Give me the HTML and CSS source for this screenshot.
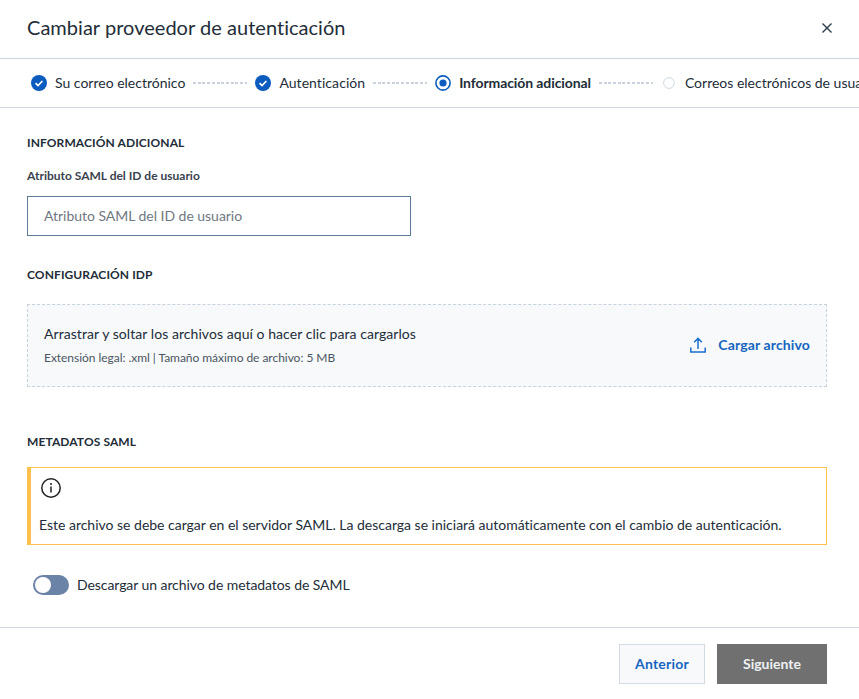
FILE: index.html
```html
<!DOCTYPE html>
<html lang="es">
<head>
<meta charset="utf-8">
<title>Cambiar proveedor de autenticación</title>
<link rel="stylesheet" href="styles.css">
</head>
<body>
<div class="modal">
  <header class="head">
    <h1 class="title">Cambiar proveedor de autenticación</h1>
    <button class="close" aria-label="Cerrar">
      <svg width="10" height="10" viewBox="0 0 10 10"><path d="M.5.5l9 9M9.5.5l-9 9" fill="none" stroke="#2b3a4a" stroke-width="1.4"/></svg>
    </button>
  </header>
  <nav class="stepper">
    <div class="step">
      <svg class="ico" width="16" height="16" viewBox="0 0 16 16"><circle cx="8" cy="8" r="8" fill="#0b5cbe"/><path d="M4.6 8.2l2.4 2.4 4.4-4.6" fill="none" stroke="#fff" stroke-width="1.7"/></svg>
      <span>Su correo electrónico</span>
    </div>
    <i class="dash"></i>
    <div class="step wide">
      <svg class="ico" width="16" height="16" viewBox="0 0 16 16"><circle cx="8" cy="8" r="8" fill="#0b5cbe"/><path d="M4.6 8.2l2.4 2.4 4.4-4.6" fill="none" stroke="#fff" stroke-width="1.7"/></svg>
      <span>Autenticación</span>
    </div>
    <i class="dash"></i>
    <div class="step current">
      <svg class="ico" width="16" height="16" viewBox="0 0 16 16"><circle cx="8" cy="8" r="7.1" fill="none" stroke="#0b5cbe" stroke-width="1.6"/><circle cx="8" cy="8" r="3.6" fill="#0b5cbe"/></svg>
      <span>Información adicional</span>
    </div>
    <i class="dash"></i>
    <div class="step last">
      <svg class="ico small" width="12" height="12" viewBox="0 0 12 12"><circle cx="6" cy="6" r="5.4" fill="none" stroke="#cfd8e3" stroke-width="1"/></svg>
      <span>Correos electrónicos de usuario</span>
    </div>
  </nav>
  <main class="content">
    <h2 class="section first">INFORMACIÓN ADICIONAL</h2>
    <label class="label" for="attr">Atributo SAML del ID de usuario</label>
    <input class="input" id="attr" placeholder="Atributo SAML del ID de usuario">
    <h2 class="section idp">CONFIGURACIÓN IDP</h2>
    <div class="drop">
      <div class="drop-text">
        <div class="drop-main">Arrastrar y soltar los archivos aquí o hacer clic para cargarlos</div>
        <div class="drop-sub">Extensión legal: .xml | Tamaño máximo de archivo: 5 MB</div>
      </div>
      <a class="upload">
        <svg width="16" height="16" viewBox="0 0 16 16" fill="none" stroke="#1a6fd0" stroke-width="1.5"><path d="M.8 10.5v4.4h14.4v-4.4M8 12V1.6M4.2 5.2L8 1.4l3.8 3.8"/></svg>
        <span>Cargar archivo</span>
      </a>
    </div>
    <h2 class="section meta">METADATOS SAML</h2>
    <div class="alert">
      <svg class="alert-ico" width="20" height="20" viewBox="0 0 20 20"><circle cx="10" cy="10" r="9.2" fill="none" stroke="#222" stroke-width="1.5"/><path d="M10 8.6v6" stroke="#222" stroke-width="1.5"/><circle cx="10" cy="5.9" r="1" fill="#222"/></svg>
      <p class="alert-text">Este archivo se debe cargar en el servidor SAML. La descarga se iniciará automáticamente con el cambio de autenticación.</p>
    </div>
    <div class="toggle-row">
      <span class="toggle"><span class="knob"></span></span>
      <span class="toggle-text">Descargar un archivo de metadatos de SAML</span>
    </div>
  </main>
  <footer class="foot">
    <button class="btn prev">Anterior</button>
    <button class="btn next">Siguiente</button>
  </footer>
</div>
</body>
</html>
```
FILE: styles.css
```css
* { box-sizing: border-box; }
html, body { margin: 0; height: 100%; background: #fff; overflow: hidden; }
body { font-family: Lato, "Liberation Sans", sans-serif; color: #222d38; font-size: 14px; font-variant-ligatures: none; }
.modal { width: 859px; height: 699px; display: flex; flex-direction: column; }
.head { height: 59px; padding: 0 25px 0 27px; border-bottom: 1px solid #cbd5e1; display: flex; align-items: center; justify-content: space-between; flex: none; }
.title { margin: 0 0 4px; font-size: 20px; font-weight: 400; color: #222d38; line-height: 24px; letter-spacing: 0.03px; }
.close { border: 0; background: none; padding: 0; margin-bottom: 3px; width: 14px; height: 14px; display: flex; align-items: center; justify-content: center; }
.stepper { height: 49px; flex: none; padding: 0 0 1px 31px; border-bottom: 1px solid #cfd6de; display: flex; align-items: center; gap: 8px; overflow: hidden; white-space: nowrap; }
.step { display: flex; align-items: center; gap: 8px; flex: none; }
.step.wide { letter-spacing: 0.06px; }
.step.current { font-weight: 700; gap: 8px; letter-spacing: -0.1px; }
.step.last { gap: 10px; }
.ico { flex: none; }
.ico.small { margin-left: 2px; }
.dash { width: 54px; height: 2px; flex: none; background: repeating-linear-gradient(90deg, #c9d3de 0 3px, transparent 3px 4.7px); }
.content { flex: 1; padding: 0 32px 0 27px; }
.section { margin: 0; font-size: 12px; font-weight: 700; line-height: 15px; color: #222d38; letter-spacing: 0.1px; }
.section.first { padding-top: 27px; }
.label { display: block; margin-top: 18px; font-size: 12px; font-weight: 700; line-height: 15px; color: #39434e; }
.input { display: block; width: 384px; height: 40px; margin-top: 13px; padding: 0 16px 2px; border: 1px solid #5f7a9b; border-radius: 0; font: 14px Lato, sans-serif; letter-spacing: -0.03px; outline: none; }
.input::placeholder { color: #6f7780; opacity: 1; }
.section.idp { margin-top: 31px; }
.drop { margin-top: 22px; height: 83px; padding: 0 16px 2px; background: #f7f9fb; border: 1px dashed #c9d3de; display: flex; align-items: center; justify-content: space-between; }
.drop-main { font-size: 14px; line-height: 18px; letter-spacing: 0.06px; }
.drop-sub { margin-top: 7px; font-size: 12px; line-height: 15px; color: #4b5560; letter-spacing: -0.04px; }
.upload { display: flex; align-items: center; gap: 12px; color: #1565c0; font-weight: 700; font-size: 14px; letter-spacing: 0.13px; }
.section.meta { margin-top: 47px; }
.alert { margin-top: 18px; height: 78px; padding: 10px 8px; border: 1px solid #ffc04d; border-left-width: 4px; }
.alert-ico { display: block; margin-left: 2px; }
.alert-text { margin: 18px 0 0; font-size: 14px; line-height: 18px; letter-spacing: -0.01px; }
.toggle-row { margin-top: 30px; padding-left: 6px; display: flex; align-items: center; gap: 8px; }
.toggle-text { position: relative; top: -1px; letter-spacing: -0.07px; }
.toggle { width: 36px; height: 20px; border-radius: 10px; background: #6a83a6; padding: 2px; flex: none; }
.knob { display: block; width: 16px; height: 16px; border-radius: 50%; background: #fff; }
.foot { height: 72px; flex: none; border-top: 1px solid #cfd6de; padding: 16px 32px 0 0; display: flex; justify-content: flex-end; gap: 12px; }
.btn { height: 40px; border-radius: 0; font: 700 14px Lato, sans-serif; padding: 0 0 2px; }
.prev { width: 86px; background: #f7f9fb; border: 1px solid #d2dbe4; color: #1565c0; letter-spacing: 0.2px; }
.next { width: 110px; background: #707070; border: 0; color: #eef0f2; }
```
